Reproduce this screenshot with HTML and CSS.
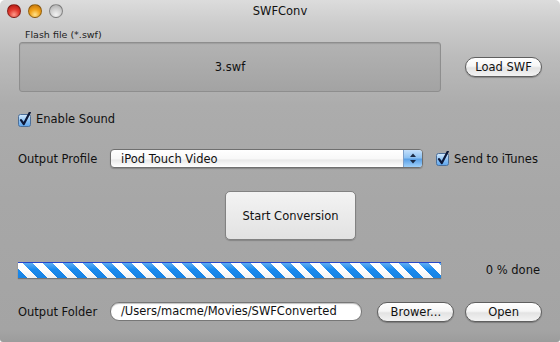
FILE: index.html
```html
<!DOCTYPE html>
<html lang="en">
<head>
    <meta charset="UTF-8">
    <title>SWFConv</title>
    <link rel="stylesheet" href="styles.css">
</head>
<body>

    <div class="window">
        <div class="titlebar">
            <div class="lights">
                <span class="light red"></span>
                <span class="light orange"></span>
                <span class="light gray"></span>
            </div>
            <div class="title">SWFConv</div>
        </div>

        <div class="content">
            <div class="file-label">Flash file (*.swf)</div>
            <div class="file-row">
                <div class="drop-box">3.swf</div>
                <button class="pill-btn">Load SWF</button>
            </div>

            <label class="check-row sound-row">
                <svg class="check" width="15" height="15" viewBox="0 0 15 15">
                    <defs>
                        <linearGradient id="cb1" x1="0" y1="0" x2="0" y2="1">
                            <stop offset="0" stop-color="#d9ecfd"/>
                            <stop offset="0.5" stop-color="#8fc3f4"/>
                            <stop offset="1" stop-color="#5ea5ec"/>
                        </linearGradient>
                    </defs>
                    <rect x="0.5" y="2.5" width="12" height="12" rx="2" fill="url(#cb1)" stroke="#4d6f99"/>
                    <path d="M3 8.2 L5.8 12 L11.8 0.6" fill="none" stroke="#0d1838" stroke-width="2.2" stroke-linecap="round" stroke-linejoin="round"/>
                </svg>
                <span>Enable Sound</span>
            </label>

            <div class="profile-row">
                <span class="row-label">Output Profile</span>
                <div class="select">
                    <span class="select-text">iPod Touch Video</span>
                    <span class="select-arrows">
                        <svg width="8" height="11" viewBox="0 0 8 11">
                            <path d="M4 0.5 L7 4 L1 4 Z" fill="#1b2a44"/>
                            <path d="M4 10.5 L7 7 L1 7 Z" fill="#1b2a44"/>
                        </svg>
                    </span>
                </div>
                <label class="check-row itunes">
                    <svg class="check" width="15" height="15" viewBox="0 0 15 15">
                        <defs>
                            <linearGradient id="cb2" x1="0" y1="0" x2="0" y2="1">
                                <stop offset="0" stop-color="#d9ecfd"/>
                                <stop offset="0.5" stop-color="#8fc3f4"/>
                                <stop offset="1" stop-color="#5ea5ec"/>
                            </linearGradient>
                        </defs>
                        <rect x="0.5" y="2.5" width="12" height="12" rx="2" fill="url(#cb2)" stroke="#4d6f99"/>
                        <path d="M3 8.2 L5.8 12 L11.8 0.6" fill="none" stroke="#0d1838" stroke-width="2.2" stroke-linecap="round" stroke-linejoin="round"/>
                    </svg>
                    <span>Send to iTunes</span>
                </label>
            </div>

            <button class="start-btn">Start Conversion</button>

            <div class="progress-row">
                <div class="progress"></div>
                <span class="progress-text">0 % done</span>
            </div>

            <div class="folder-row">
                <span class="row-label">Output Folder</span>
                <div class="folder-field">/Users/macme/Movies/SWFConverted</div>
                <button class="pill-btn browse">Brower...</button>
                <button class="pill-btn open">Open</button>
            </div>
        </div>
    </div>

</body>
</html>
```

FILE: styles.css
```css
body {
    margin: 0;
    background: #ffffff;
    font-family: "DejaVu Sans", Verdana, sans-serif;
    font-size: 11px;
    color: #111;
}

.window {
    width: 560px;
    height: 342px;
    border-radius: 5px 5px 3px 3px;
    overflow: hidden;
    background: linear-gradient(#dcdcdc 0px, #cdcdcd 22px, #bcbcbc 55px, #acacac 105px, #a7a7a7 200px, #a4a4a4 330px, #9c9c9c 342px);
}

/* title bar */
.titlebar {
    position: relative;
    height: 22px;
}

.lights {
    display: flex;
    gap: 7px;
    padding: 4px 0 0 7px;
}

.light {
    width: 12px;
    height: 12px;
    border-radius: 50%;
    border: 0.5px solid rgba(0, 0, 0, 0.35);
}

.light.red {
    background: radial-gradient(circle at 50% 80%, #ff9a8a 0, #e23b30 45%, #a8120c 100%);
}

.light.orange {
    background: radial-gradient(circle at 50% 80%, #ffe28a 0, #f1a21a 45%, #b96a05 100%);
}

.light.gray {
    background: radial-gradient(circle at 50% 80%, #f2f2f2 0, #cfcfcf 50%, #a8a8a8 100%);
}

.title {
    position: absolute;
    left: 0;
    right: 0;
    top: 4px;
    text-align: center;
    font-size: 11.5px;
    color: #111;
}

.content {
    padding: 0 18px 0 18px;
}

/* flash file */
.file-label {
    margin: 7px 0 0 7px;
    height: 13px;
    font-size: 9.5px;
    color: #222;
}

.file-row {
    display: flex;
    align-items: center;
    justify-content: space-between;
}

.drop-box {
    margin-left: 1px;
    width: 420px;
    height: 48px;
    border: 1px solid #8e8e8e;
    border-radius: 3px;
    background: linear-gradient(#b3b3b3, #a3a3a3);
    box-shadow: inset 0 1px 1px rgba(0, 0, 0, 0.12);
    display: flex;
    align-items: center;
    justify-content: center;
    font-size: 11.5px;
    color: #111;
}

.pill-btn {
    width: 77px;
    height: 20px;
    padding: 0;
    border: 1px solid #5f5f5f;
    border-radius: 10px;
    background: linear-gradient(#ffffff 0%, #f6f6f6 45%, #e3e3e3 55%, #f3f3f3 100%);
    box-shadow: 0 1px 1px rgba(0, 0, 0, 0.25);
    font-family: "DejaVu Sans", Verdana, sans-serif;
    font-size: 11.5px;
    color: #111;
}

/* checkboxes */
.check-row {
    display: flex;
    align-items: center;
    gap: 3px;
}

.check {
    display: block;
}

.sound-row {
    margin-top: 19px;
    height: 16px;
}

.sound-row span {
    font-size: 11.5px;
}

/* output profile */
.profile-row {
    display: flex;
    align-items: center;
    margin-top: 22px;
    height: 19px;
}

.row-label {
    width: 92px;
    flex: none;
    font-size: 11.5px;
}

.select {
    width: 311px;
    height: 17px;
    border: 1px solid #6f6f6f;
    border-radius: 4px;
    background: linear-gradient(#ffffff 0%, #f8f8f8 50%, #e9e9e9 60%, #ffffff 100%);
    box-shadow: 0 1px 1px rgba(0, 0, 0, 0.2);
    display: flex;
    align-items: center;
    overflow: hidden;
}

.select-text {
    flex: 1;
    padding-left: 10px;
    font-size: 11.5px;
}

.select-arrows {
    width: 18px;
    height: 17px;
    border-left: 1px solid #7d9fc8;
    background: linear-gradient(#c5e0fa 0%, #8ec2f2 45%, #5aa0e6 55%, #9fd0fa 100%);
    display: flex;
    align-items: center;
    justify-content: center;
}

.itunes {
    margin-left: 13px;
}

.itunes span {
    font-size: 11.5px;
}

/* start */
.start-btn {
    display: block;
    margin: 23px 0 0 207px;
    width: 131px;
    height: 49px;
    padding: 0;
    border: 1px solid #828282;
    border-radius: 5px;
    background: linear-gradient(#f3f3f3, #e2e2e2);
    box-shadow: 0 1px 1px rgba(0, 0, 0, 0.2);
    font-family: "DejaVu Sans", Verdana, sans-serif;
    font-size: 11.5px;
    color: #111;
}

/* progress */
.progress-row {
    display: flex;
    align-items: center;
    justify-content: space-between;
    margin-top: 22px;
    height: 16px;
}

.progress {
    width: 423px;
    height: 15px;
    border-top: 1px solid #2546c8;
    background:
        linear-gradient(rgba(255, 255, 255, 0.3), rgba(255, 255, 255, 0) 45%, rgba(0, 0, 0, 0.05)),
        repeating-linear-gradient(45deg, #1a8aee 0, #1a8aee 7px, #ffffff 7px, #ffffff 14px);
    box-shadow: 0 1px 1px rgba(0, 0, 0, 0.3);
}

.progress-text {
    margin-right: 2px;
    font-size: 11.5px;
}

/* output folder */
.folder-row {
    display: flex;
    align-items: center;
    margin-top: 24px;
    height: 19px;
}

.folder-field {
    width: 241px;
    height: 17px;
    padding-left: 10px;
    border: 1px solid #777;
    border-radius: 9px;
    background: #ffffff;
    box-shadow: inset 0 1px 1px rgba(0, 0, 0, 0.25);
    line-height: 17px;
    font-size: 11.5px;
}

.browse {
    margin-left: 15px;
}

.open {
    margin-left: 11px;
}
```
